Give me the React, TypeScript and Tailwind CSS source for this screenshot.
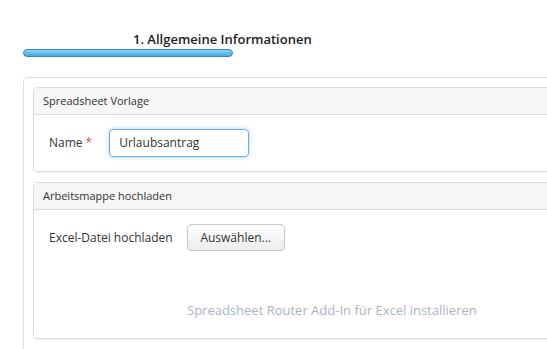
import React from 'react';

export default function App() {
  return (
    <div className="min-h-[349px] w-[547px] overflow-hidden bg-white pt-[31px] text-[#333] [font-family:'Open_Sans',sans-serif]">
      {/* Wizard step */}
      <div className="pl-[133px] text-[13px] font-semibold leading-[16px] text-[#222]">1. Allgemeine Informationen</div>
      <div className="ml-[23px] mt-[2px] h-[8px] w-[210px] rounded-full border border-[#3a87ad] bg-gradient-to-b from-[#8fd3f4] to-[#3fa9e0]" />

      {/* Outer card */}
      <div className="ml-[23px] mt-[20px] w-[600px] rounded-[4px] border border-[#dedede] px-[9px] pt-[9px] pb-[20px]">
        {/* Spreadsheet Vorlage */}
        <div className="rounded-[4px] border border-[#dcdcdc] shadow-[0_1px_1px_rgba(0,0,0,0.04)]">
          <div className="flex h-[27px] items-center border-b border-[#dcdcdc] bg-[#f6f6f6] px-[9px] text-[11px]">Spreadsheet Vorlage</div>
          <div className="flex items-center px-[15px] py-[14px]">
            <span className="text-[12px]">Name</span>
            <span className="ml-[3px] text-[12px] text-[#d9534f]">*</span>
            <div className="ml-[17px] flex h-[28px] w-[140px] items-center rounded-[4px] border border-[#66afe9] px-[9px] text-[12px] shadow-[0_0_4px_rgba(102,175,233,0.6)]">
              Urlaubsantrag
            </div>
          </div>
        </div>

        {/* Arbeitsmappe hochladen */}
        <div className="mt-[10px] rounded-[4px] border border-[#dcdcdc] shadow-[0_1px_1px_rgba(0,0,0,0.04)]">
          <div className="flex h-[27px] items-center border-b border-[#dcdcdc] bg-[#f6f6f6] px-[9px] text-[11px]">Arbeitsmappe hochladen</div>
          <div className="h-[128px] px-[15px] pt-[14px]">
            <div className="flex items-center">
              <span className="text-[12px]">Excel-Datei hochladen</span>
              <button className="ml-[14px] flex h-[27px] w-[98px] items-center justify-center rounded-[4px] border border-[#c8c8c8] bg-gradient-to-b from-white to-[#ececec] text-[12px] text-[#333]">
                Auswählen...
              </button>
            </div>
            <div className="ml-[138px] mt-[50px] text-[13px] text-[#a9b5c4]">
              Spreadsheet Router Add-In für Excel installieren
            </div>
          </div>
        </div>
      </div>
    </div>
  );
}
